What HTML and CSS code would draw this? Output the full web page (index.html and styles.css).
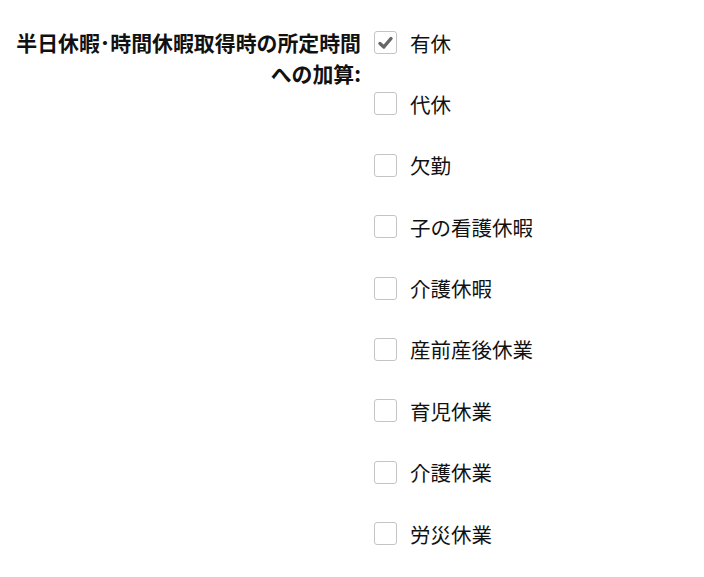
FILE: index.html
```html
<!DOCTYPE html>
<html>
<head>
  <meta charset="UTF-8">
  <title>所定時間への加算</title>
  <link rel="stylesheet" href="styles.css">
</head>
<body>
  <div class="field">
    <div class="field-label">半日休暇･時間休暇取得時の所定時間<br>への加算:</div>
    <ul class="options">
      <li><span class="box checked"><svg viewBox="0 0 23 23" width="23" height="23"><path d="M6 12.5 L9.8 16 L17 7.5" fill="none" stroke="#666" stroke-width="3.4" stroke-linecap="round" stroke-linejoin="round"/></svg></span>有休</li>
      <li><span class="box"></span>代休</li>
      <li><span class="box"></span>欠勤</li>
      <li><span class="box"></span>子の看護休暇</li>
      <li><span class="box"></span>介護休暇</li>
      <li><span class="box"></span>産前産後休業</li>
      <li><span class="box"></span>育児休業</li>
      <li><span class="box"></span>介護休業</li>
      <li><span class="box"></span>労災休業</li>
    </ul>
  </div>
</body>
</html>
```

FILE: styles.css
```css
body { margin: 0; font-family: "Noto Sans CJK JP", "Noto Sans", sans-serif; color: #111; background: #fff; }
.field { display: flex; align-items: flex-start; padding-top: 27px; }
.field-label { width: 361px; text-align: right; font-weight: bold; font-size: 20.9px; line-height: 31px; }
.options { list-style: none; margin: 4px 0 0 13px; padding: 0; display: flex; flex-direction: column; gap: 38.4px; }
.options li { display: flex; align-items: center; height: 23px; font-size: 20.5px; }
.box { width: 21px; height: 21px; border: 1px solid #c4c4c4; border-radius: 3px; margin-right: 13px; display: inline-flex; }
.box svg { margin: -1px; }
```
